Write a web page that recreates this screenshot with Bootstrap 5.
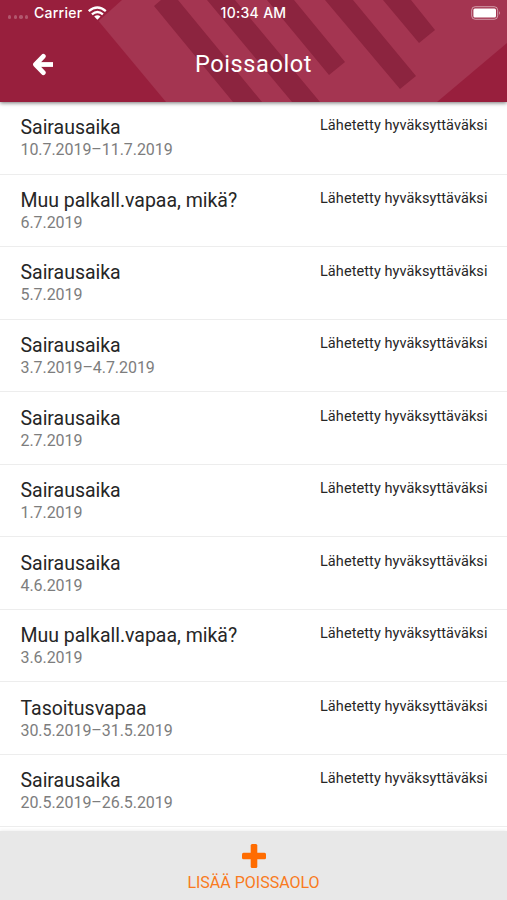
<!DOCTYPE html>
<html lang="fi">
<head>
<meta charset="utf-8">
<meta name="viewport" content="width=device-width, initial-scale=1">
<title>Poissaolot</title>
<link href="https://cdn.jsdelivr.net/npm/bootstrap@5.3.0/dist/css/bootstrap.min.css" rel="stylesheet">
<style>
body{font-family:Roboto,"Noto Sans",sans-serif;color:#262626;background:#fff}
.app-head{height:102px;background:#981f3d;box-shadow:0 1px 4px rgba(0,0,0,.55);z-index:2}
.app-head .pattern{inset:0}
.status-bar{height:26px;font:500 14px/26px Inter,sans-serif}
.status-bar .dots{gap:2.2px;width:22px}
.status-bar .dots i{width:3.4px;height:3.4px;border-radius:50%;background:rgba(255,255,255,.25)}
.carrier{letter-spacing:.25px}
.clock{letter-spacing:.3px}
.side{width:170px}
.battery{padding-right:5px}
.title-bar{height:76px}
.title-bar h1{font-size:23.5px;font-weight:400;line-height:28px;letter-spacing:.6px}
.absence{height:72.55px;border-bottom:1.5px solid #ededed;padding:14.4px 19.5px 0 20.5px}
.kind{font-size:19.5px;line-height:24px;letter-spacing:-.02px}
.dates{font-size:16px;line-height:20px;color:#7d7d7d;letter-spacing:-.06px}
.state{font-size:14.5px;line-height:20px;letter-spacing:.08px;padding-top:.1px}
.add-bar{height:69px;background:#e8e8e8;color:#f97a20;padding-top:12px;box-shadow:0 -1px 3px rgba(0,0,0,.06);z-index:2}
.add-bar .lbl{font-size:16px;line-height:20px;margin-top:4px}
</style>
<script src="https://cdn.jsdelivr.net/npm/bootstrap@5.3.0/dist/js/bootstrap.bundle.min.js"></script>
</head>
<body>
<div class="vh-100 d-flex flex-column overflow-hidden">
<header class="app-head position-relative flex-shrink-0 text-white">
<svg class="pattern position-absolute" width="507" height="102" viewBox="0 0 507 102" aria-hidden="true">
<path fill="#a43551" d="M98.500 21L122 0H507V43L437 102H166Z"/>
<path fill="#8c243f" d="M154 6L161 0H178L262 102H233ZM207 0H235L320 102H292ZM267 0H294L345 62L329 75ZM325 0H353L416 76L400 89ZM383 0H411L435 30L419 43Z"/>
</svg>
<div class="status-bar position-relative d-flex justify-content-between">
<div class="side d-flex align-items-center">
<span class="dots d-flex ms-2 mt-2"><i></i><i></i><i></i><i></i></span>
<span class="carrier ms-1">Carrier</span>
<svg class="ms-1" width="22" height="14" viewBox="-1.500 0 22 14" fill="none" stroke="#fff" stroke-width="2.300"><path d="M1.200 5.200Q10-2.200 18.300 5.200M4.400 8.300Q10 3.600 15.400 8.300"/><path fill="#fff" stroke="none" d="M6.700 10.500Q10 8 13 10.500L9.900 13.800Z"/></svg>
</div>
<span class="clock">10:34 AM</span>
<div class="side battery d-flex align-items-center justify-content-end">
<svg width="31" height="14" viewBox="0 0 31 14"><rect x=".7" y=".7" width="26" height="12.600" rx="3.500" fill="none" stroke="#fff" stroke-opacity=".5"/><rect x="2.400" y="2.400" width="22.600" height="9.200" rx="1.500" fill="#fff"/><path fill="#fff" fill-opacity=".6" d="M28.200 5Q30 7 28.200 9Z"/></svg>
</div>
</div>
<div class="title-bar position-relative d-flex align-items-center">
<div class="side ps-4"><svg class="ms-2" width="22" height="23" viewBox="0 0 22 23" fill="none" stroke="#fff" stroke-width="4.800" stroke-linejoin="round"><path stroke-linecap="round" d="M11.300 3.300L3.500 11.500L11.300 19.700"/><path d="M4.500 11.500H21" /></svg></div>
<h1 class="flex-grow-1 text-center mb-0">Poissaolot</h1>
<div class="side"></div>
</div>
</header>
<main class="flex-grow-1 overflow-hidden">
<div class="absence d-flex justify-content-between"><div><div class="kind">Sairausaika</div><div class="dates">10.7.2019–11.7.2019</div></div><div class="state">Lähetetty hyväksyttäväksi</div></div>
<div class="absence d-flex justify-content-between"><div><div class="kind">Muu palkall.vapaa, mikä?</div><div class="dates">6.7.2019</div></div><div class="state">Lähetetty hyväksyttäväksi</div></div>
<div class="absence d-flex justify-content-between"><div><div class="kind">Sairausaika</div><div class="dates">5.7.2019</div></div><div class="state">Lähetetty hyväksyttäväksi</div></div>
<div class="absence d-flex justify-content-between"><div><div class="kind">Sairausaika</div><div class="dates">3.7.2019–4.7.2019</div></div><div class="state">Lähetetty hyväksyttäväksi</div></div>
<div class="absence d-flex justify-content-between"><div><div class="kind">Sairausaika</div><div class="dates">2.7.2019</div></div><div class="state">Lähetetty hyväksyttäväksi</div></div>
<div class="absence d-flex justify-content-between"><div><div class="kind">Sairausaika</div><div class="dates">1.7.2019</div></div><div class="state">Lähetetty hyväksyttäväksi</div></div>
<div class="absence d-flex justify-content-between"><div><div class="kind">Sairausaika</div><div class="dates">4.6.2019</div></div><div class="state">Lähetetty hyväksyttäväksi</div></div>
<div class="absence d-flex justify-content-between"><div><div class="kind">Muu palkall.vapaa, mikä?</div><div class="dates">3.6.2019</div></div><div class="state">Lähetetty hyväksyttäväksi</div></div>
<div class="absence d-flex justify-content-between"><div><div class="kind">Tasoitusvapaa</div><div class="dates">30.5.2019–31.5.2019</div></div><div class="state">Lähetetty hyväksyttäväksi</div></div>
<div class="absence d-flex justify-content-between"><div><div class="kind">Sairausaika</div><div class="dates">20.5.2019–26.5.2019</div></div><div class="state">Lähetetty hyväksyttäväksi</div></div>
</main>
<footer class="add-bar position-relative flex-shrink-0 d-flex flex-column align-items-center">
<svg width="26" height="26" viewBox="0 0 26 26" fill="#ff6c00"><rect x="9.700" y="1" width="6.600" height="24" rx="1.500"/><rect x="1" y="9.700" width="24" height="6.600" rx="1.500"/></svg>
<span class="lbl">LISÄÄ POISSAOLO</span>
</footer>
</div>
</body>
</html>
